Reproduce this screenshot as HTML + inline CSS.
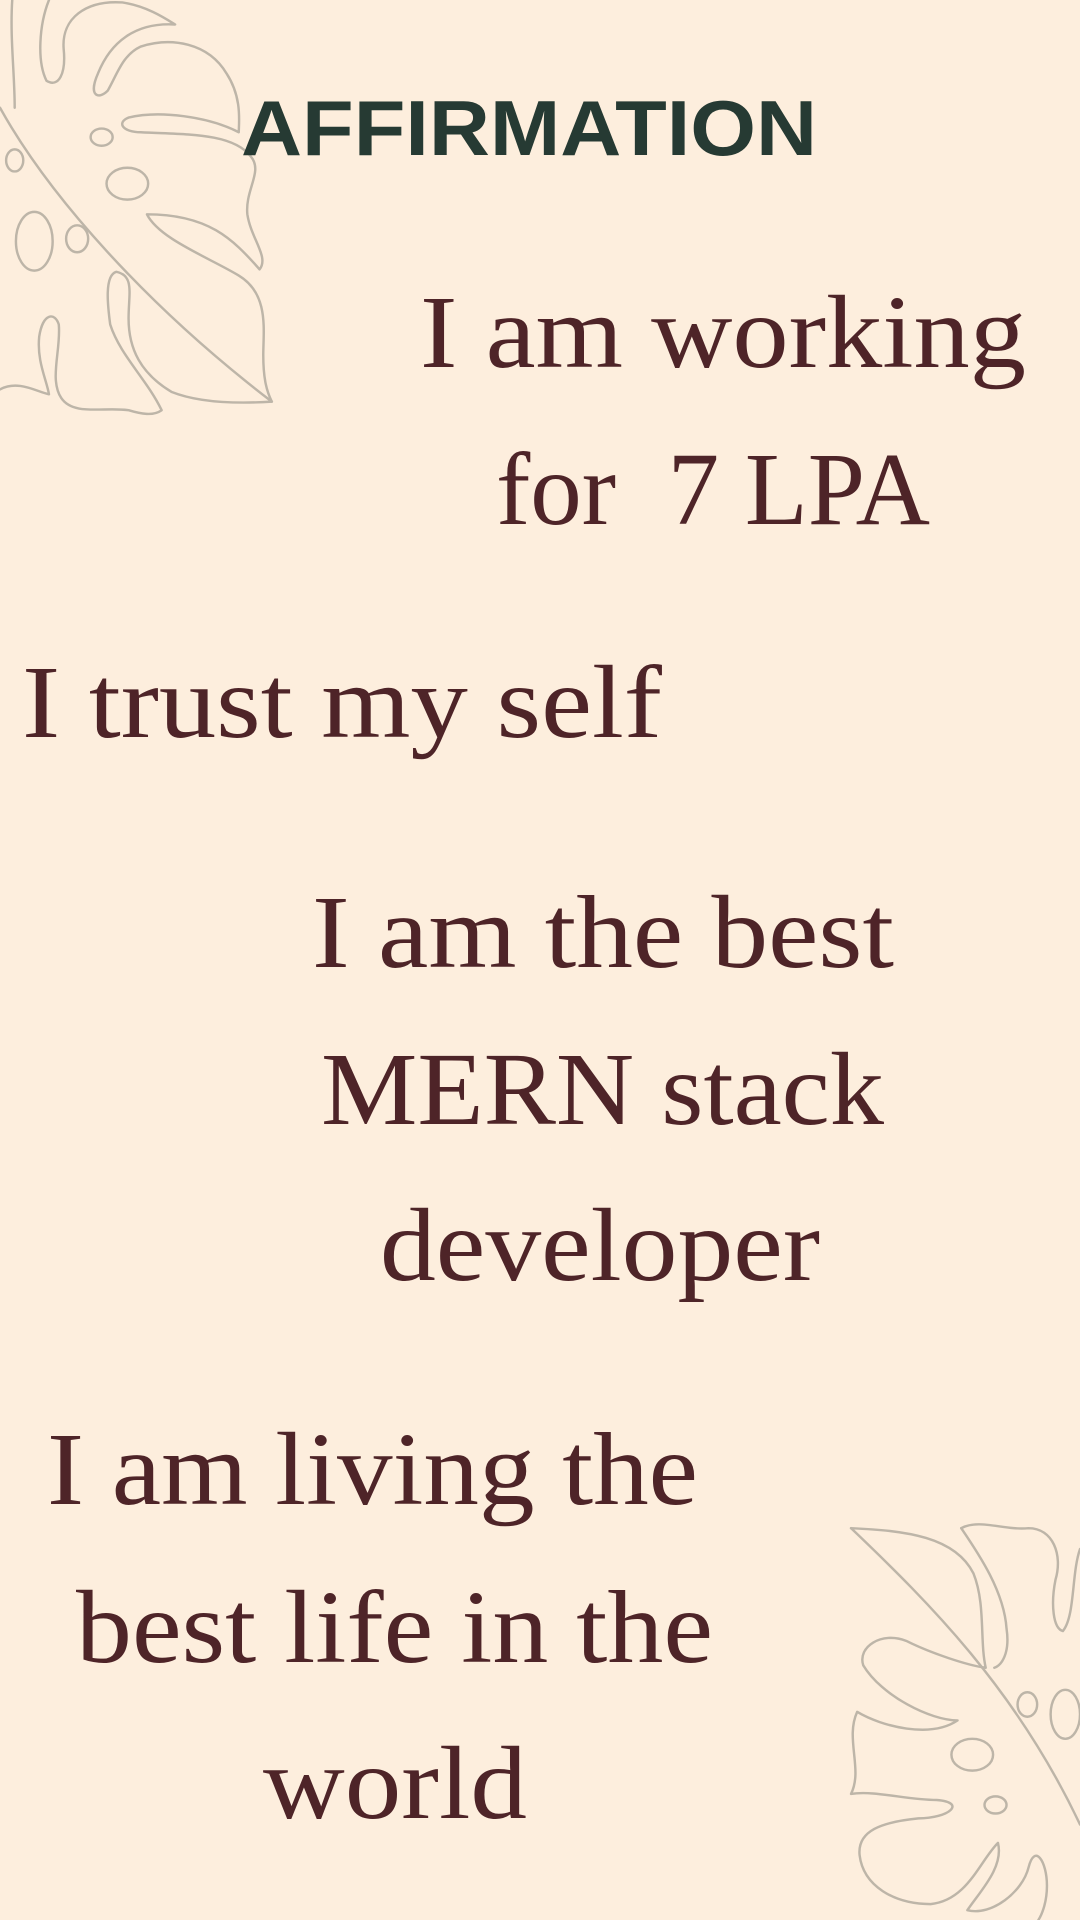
<!DOCTYPE html>
<html><head><meta charset="utf-8"><style>
html,body{margin:0;padding:0;background:#fdeedd;}
svg{display:block}
</style></head><body>
<svg width="1080" height="1920" viewBox="0 0 1080 1920" xmlns="http://www.w3.org/2000/svg">
<rect width="1080" height="1920" fill="#fdeedd"/>
<g transform="scale(1.2245)" fill="none" stroke="#bdb5a8" stroke-width="2" stroke-linecap="round" stroke-linejoin="round">
 <path d="M0 88 C40 160 120 250 222 328"/>
 <path d="M10 0 C8 30 12 60 12 88"/>
 <path d="M40 0 C32 20 30 50 38 66 C48 72 54 60 52 40 C50 15 70 0 100 2 C120 5 135 15 143 20 C110 18 90 35 80 60 C72 78 80 82 88 74 C96 60 100 45 115 38 C140 30 170 35 185 60 C198 80 195 100 195 108 C170 95 130 90 105 96 C95 100 100 108 115 108 C150 110 190 108 205 128 C215 140 200 155 202 175 C205 195 220 210 212 220 C190 195 170 175 120 175 C130 195 170 210 195 225 C220 240 215 270 215 290 C215 310 218 320 222 328 C190 330 160 328 140 320 C115 305 105 285 105 260 C105 240 110 225 95 222 C85 225 88 250 90 265 C98 290 120 310 132 335 C125 340 115 338 105 335 C85 332 60 340 50 325 C40 310 50 285 48 265 C45 255 35 255 32 275 C30 295 38 310 40 322 C30 320 15 310 0 318"/>
 <ellipse cx="83" cy="112" rx="9" ry="7"/>
 <ellipse cx="104" cy="150" rx="17" ry="13"/>
 <ellipse cx="12" cy="131" rx="7" ry="9"/>
 <ellipse cx="28" cy="197" rx="15" ry="24"/>
 <ellipse cx="63" cy="195" rx="9" ry="11"/>
 <path d="M695 1248 C760 1310 830 1380 882 1490"/>
 <path d="M695 1248 C740 1250 780 1255 795 1285 C805 1310 800 1340 805 1362 C790 1360 760 1350 740 1340 C720 1332 700 1345 705 1360 C720 1385 760 1405 782 1405 C760 1420 720 1410 700 1398 C690 1420 705 1445 695 1465 C715 1462 740 1470 765 1470 C790 1472 775 1485 750 1485 C720 1488 700 1495 702 1515 C705 1540 730 1555 760 1555 C790 1552 800 1520 815 1505 C820 1525 800 1545 790 1560 C810 1565 835 1545 840 1525 C845 1505 855 1520 855 1540 C855 1555 850 1565 848 1568"/>
 <path d="M785 1248 C800 1240 820 1250 840 1248 C860 1248 868 1270 862 1290 C858 1310 860 1330 868 1332 C878 1320 875 1285 882 1265"/>
 <path d="M785 1248 C800 1270 820 1300 822 1330 C825 1350 818 1360 812 1362"/>
 <ellipse cx="839" cy="1392" rx="8" ry="10"/>
 <ellipse cx="794" cy="1433" rx="17" ry="13"/>
 <ellipse cx="813" cy="1474" rx="9" ry="7"/>
 <ellipse cx="870" cy="1400" rx="12" ry="20"/>
</g>
<text x="529" y="155" text-anchor="middle" font-family="Liberation Sans, sans-serif" font-weight="bold" font-size="78" fill="#263a33" textLength="576" lengthAdjust="spacingAndGlyphs">AFFIRMATION</text>
<g font-family="Liberation Serif, serif" font-size="104" fill="#4e2428">
<text x="420" y="367" textLength="606" lengthAdjust="spacingAndGlyphs">I am working</text>
<text x="496" y="524" textLength="434" lengthAdjust="spacingAndGlyphs">for&#160; 7 LPA</text>
<text x="22" y="737" textLength="640" lengthAdjust="spacingAndGlyphs">I trust my self</text>
<text x="312" y="967" textLength="582" lengthAdjust="spacingAndGlyphs">I am the best</text>
<text x="321" y="1124" textLength="563" lengthAdjust="spacingAndGlyphs">MERN stack</text>
<text x="380" y="1280" textLength="440" lengthAdjust="spacingAndGlyphs">developer</text>
<text x="47" y="1504" textLength="651" lengthAdjust="spacingAndGlyphs">I am living the</text>
<text x="76" y="1662" textLength="637" lengthAdjust="spacingAndGlyphs">best life in the</text>
<text x="263" y="1818" textLength="264" lengthAdjust="spacingAndGlyphs">world</text>
</g>
</svg>
</body></html>
